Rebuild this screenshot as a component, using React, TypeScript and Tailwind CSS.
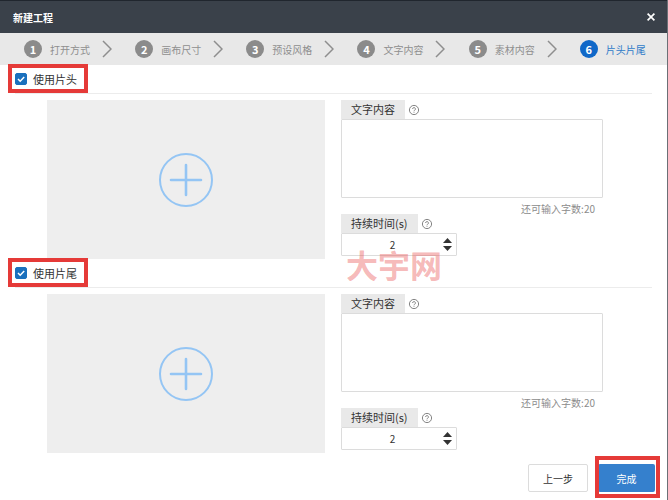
import { useId, useState } from "react";

const STEPS = ["打开方式", "画布尺寸", "预设风格", "文字内容", "素材内容", "片头片尾"];
const ACTIVE_STEP = 5;

function HelpIcon() {
  return (
    <svg viewBox="0 0 12 12" className="size-3 shrink-0" fill="none" stroke="#777" aria-hidden="true">
      <circle cx="6" cy="6" r="4.6" strokeWidth="0.9" />
      <path d="M4.6 5a1.4 1.4 0 1 1 2.1 1.2c-.5.3-.7.5-.7 1M6 7.9v.8" strokeWidth="0.9" />
    </svg>
  );
}

function Steps() {
  return (
    <ol className="grid h-8 grid-cols-6 bg-[#e8e8e8]">
      {STEPS.map((label, i) => {
        const active = i === ACTIVE_STEP;
        return (
          <li key={label} className="flex items-center pl-6">
            <span
              className={`flex size-[18px] shrink-0 items-center justify-center rounded-full text-[11px] leading-none font-bold text-white ${
                active ? "bg-[#1068c8]" : "bg-[#8b8b8b]"
              }`}
            >
              {i + 1}
            </span>
            <span className={`ml-2 text-[10px] whitespace-nowrap ${active ? "text-[#2f7bc8]" : "text-[#8f8f8f]"}`}>
              {label}
            </span>
            {i < STEPS.length - 1 && (
              <svg viewBox="0 0 10 18" className="ml-3 h-[18px] w-2.5 shrink-0" fill="none" stroke="#8e8e8e" aria-hidden="true">
                <path d="M1 1l8 8-8 8" strokeWidth="1.5" />
              </svg>
            )}
          </li>
        );
      })}
    </ol>
  );
}

function Clip({ title }: { title: string }) {
  const id = useId();
  const [enabled, setEnabled] = useState(true);
  const [text, setText] = useState("");
  const [seconds, setSeconds] = useState(2);

  return (
    <section>
      <div className="relative ml-[15px] mr-[15px] flex h-[29px] items-center border-b border-[#ececec]">
        <label className="flex items-center text-[11px] text-[#333]">
          <input
            type="checkbox"
            checked={enabled}
            onChange={(e) => setEnabled(e.target.checked)}
            className="peer size-3 appearance-none rounded-[2px] border border-[#1a70bd] checked:bg-[#1a70bd]"
          />
          <svg viewBox="0 0 12 12" className="pointer-events-none -ml-3 size-3 opacity-0 peer-checked:opacity-100" fill="none" stroke="#fff" aria-hidden="true">
            <path d="M3 6l2.2 2.2L9.2 4" strokeWidth="1.5" />
          </svg>
          <span className="ml-1.5">{title}</span>
        </label>
        <div className="pointer-events-none absolute -top-px -left-[7px] h-[29px] w-20 border-4 border-[#e53a38]" />
      </div>

      <div className="flex gap-4 pt-1.5 pr-16 pl-[47px]">
        <button type="button" aria-label="添加" className="flex h-[159px] flex-1 items-center justify-center bg-[#eee]">
          <svg viewBox="0 0 56 56" className="size-14" fill="none" stroke="#94c5f4" aria-hidden="true">
            <circle cx="28" cy="28" r="26" strokeWidth="2" />
            <path d="M28 13v30M13 28h30" strokeWidth="2.6" strokeLinecap="round" />
          </svg>
        </button>

        <div className="w-[262px]">
          <div className="flex h-[19px] items-center gap-[3px]">
            <label htmlFor={`${id}-text`} className="flex h-full items-center bg-[#e9e9e9] px-2.5 text-[11px] text-[#333]">
              文字内容
            </label>
            <HelpIcon />
          </div>
          <textarea
            id={`${id}-text`}
            maxLength={20}
            value={text}
            onChange={(e) => setText(e.target.value)}
            className="block h-[79px] w-full resize-none rounded-[1px] border border-[#dcdcdc] bg-white p-1 text-[11px] outline-none"
          />
          <p className="flex h-4 items-end justify-end pr-2 text-[10px] leading-none text-[#8c8c8c]">还可输入字数:{20 - text.length}</p>
          <div className="flex h-[19px] items-center gap-[3px]">
            <label htmlFor={`${id}-time`} className="flex h-full items-center bg-[#e9e9e9] px-2.5 text-[11px] text-[#333]">
              持续时间(s)
            </label>
            <HelpIcon />
          </div>
          <div className="flex h-[23px] w-[116px] items-center rounded-[1px] border border-[#dcdcdc] bg-white">
            <input
              id={`${id}-time`}
              inputMode="numeric"
              value={seconds}
              onChange={(e) => setSeconds(Number(e.target.value) || 0)}
              className="h-full w-[101px] min-w-0 bg-transparent text-center text-[10px] text-[#333] outline-none"
            />
            <div className="flex shrink-0 flex-col gap-[3px]">
              <button type="button" aria-label="增加" onClick={() => setSeconds(seconds + 1)}>
                <svg viewBox="0 0 9 5" className="block h-[5px] w-[9px]" fill="#333">
                  <path d="M0 5L4.5 0 9 5z" />
                </svg>
              </button>
              <button type="button" aria-label="减少" onClick={() => setSeconds(Math.max(0, seconds - 1))}>
                <svg viewBox="0 0 9 5" className="block h-[5px] w-[9px]" fill="#333">
                  <path d="M0 0L4.5 5 9 0z" />
                </svg>
              </button>
            </div>
          </div>
        </div>
      </div>
    </section>
  );
}

export default function App() {
  return (
    <main className="relative min-h-screen border-r border-[#6b7076] bg-white font-['Noto_Sans_CJK_SC',sans-serif]">
      <header className="flex h-[33px] items-center justify-between border-t border-[#20262e] bg-[#3a414a] pr-2.5 pl-[13px]">
        <h1 className="text-[10px] font-bold text-white">新建工程</h1>
        <button type="button" aria-label="关闭" className="flex size-3 items-center justify-center">
          <svg viewBox="0 0 8 8" className="size-2" stroke="#fff" aria-hidden="true">
            <path d="M.6.6l6.8 6.8M7.4.6L.6 7.4" strokeWidth="1.7" />
          </svg>
        </button>
      </header>
      <Steps />
      <Clip title="使用片头" />
      <Clip title="使用片尾" />

      <footer className="flex justify-end gap-2.5 pt-[11px] pr-3">
        <button type="button" className="h-7 w-[60px] rounded-[2px] border border-[#dcdcdc] bg-white text-[10px] text-[#333]">
          上一步
        </button>
        <div className="relative">
          <button type="button" className="block h-7 w-[57px] rounded-[2px] bg-[#3580cd] text-[10px] text-white">
            完成
          </button>
          <div className="pointer-events-none absolute -top-2 -right-[5px] -bottom-1.5 -left-[3px] border-4 border-[#e53a38]" />
        </div>
      </footer>

      <div className="pointer-events-none absolute top-[248px] left-[346px] text-[32px] leading-none font-bold text-[#e84a4a]/40">大宇网</div>
    </main>
  );
}
